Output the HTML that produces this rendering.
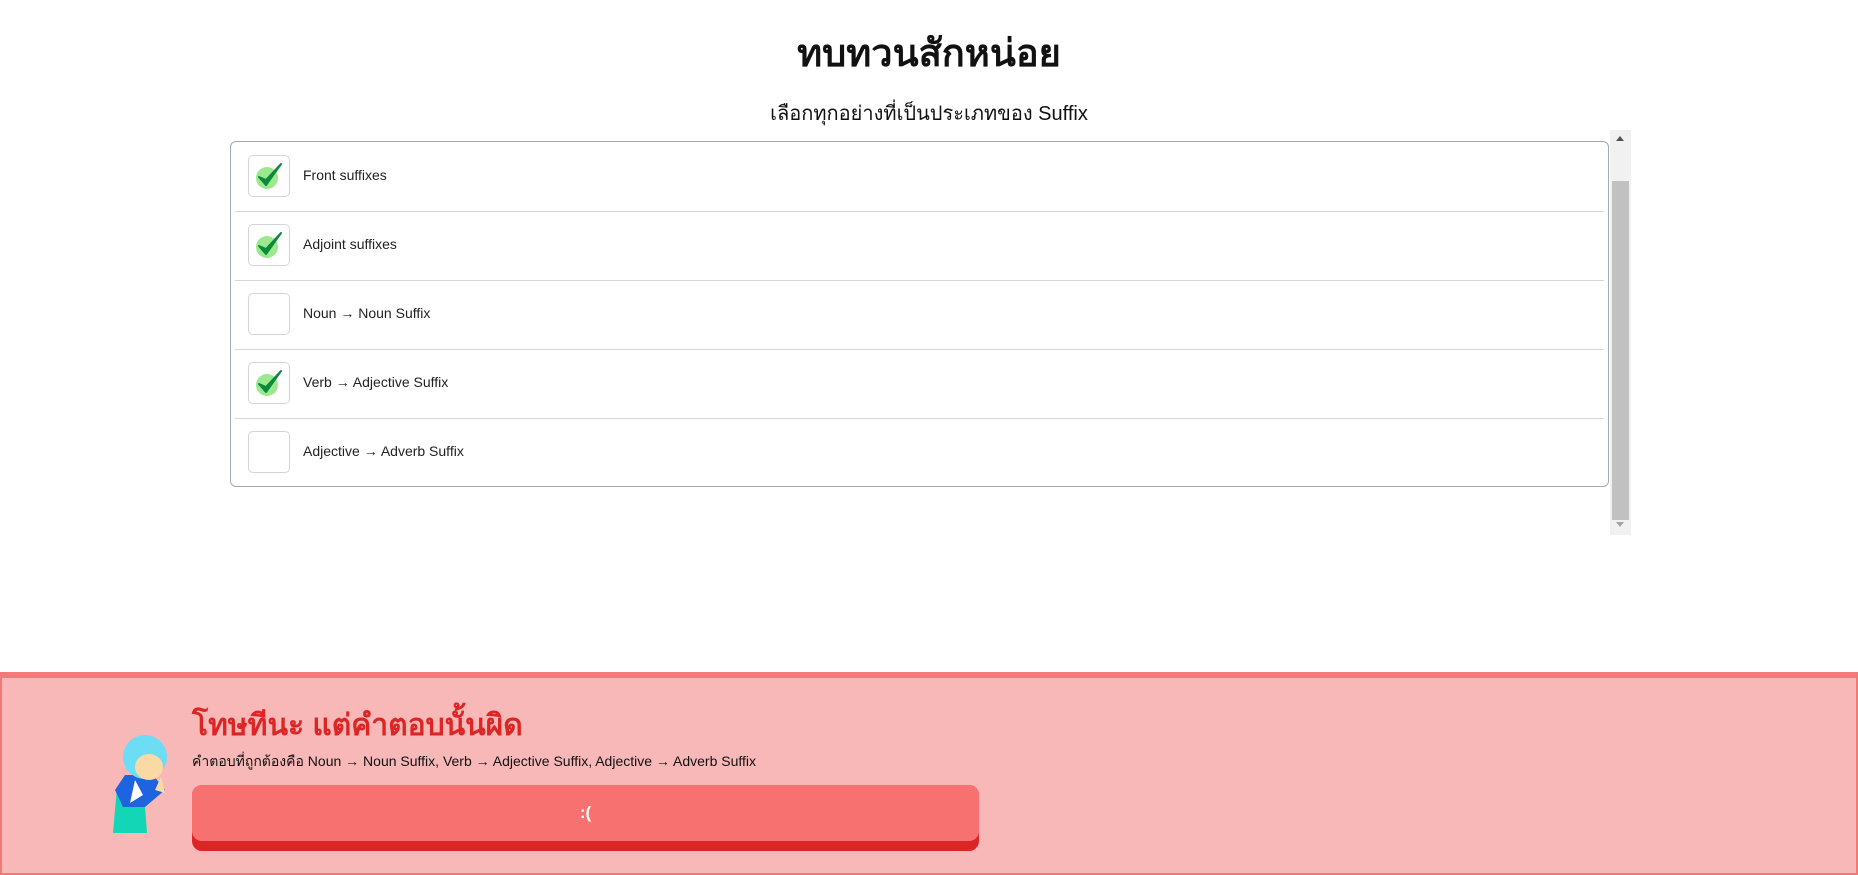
<!DOCTYPE html>
<html><head><meta charset="utf-8"><style>
body{margin:0;width:1858px;height:871px;background:#fff;position:relative;overflow:hidden;font-family:"Liberation Sans","Noto Sans CJK SC",sans-serif;}
.t{position:absolute;left:0;width:1858px;text-align:center;color:#111}
.box{position:absolute;left:230px;top:141px;width:1377px;height:344px;border:1px solid #a3a8b3;border-radius:6px;}
.row{position:absolute;left:4px;width:1369px;height:69px;border-bottom:1px solid #d4d6dc;}
.row:last-child{border-bottom:none}
.cb{position:absolute;left:13px;top:13px;width:40px;height:40px;border:1px solid #d3d5da;border-radius:5px;background:#fff}
.lb{position:absolute;left:68px;top:25px;font-size:14px;color:#222}
.sb{position:absolute;left:1610px;top:130px;width:21px;height:405px;background:#f1f1f1}
.th{position:absolute;left:2px;top:51px;width:17px;height:339px;background:#c1c1c1}
</style></head><body>
<div class="t" style="top:22px;font-size:38px;font-weight:bold">ทบทวนสักหน่อย</div>
<div class="t" style="top:97px;font-size:20px">เลือกทุกอย่างที่เป็นประเภทของ Suffix</div>
<div class="box">
<div class="row" style="top:0"><div class="cb"><svg width="40" height="40"><circle cx="18" cy="22" r="11" fill="#9be88e"/><path d="M10 21 L17 29 L32 8 L17 24 Z" fill="#0b8a3a" stroke="#0b8a3a" stroke-width="2" stroke-linejoin="round"/></svg></div><div class="lb">Front suffixes</div></div>
<div class="row" style="top:69px"><div class="cb"><svg width="40" height="40"><circle cx="18" cy="22" r="11" fill="#9be88e"/><path d="M10 21 L17 29 L32 8 L17 24 Z" fill="#0b8a3a" stroke="#0b8a3a" stroke-width="2" stroke-linejoin="round"/></svg></div><div class="lb">Adjoint suffixes</div></div>
<div class="row" style="top:138px"><div class="cb"></div><div class="lb">Noun → Noun Suffix</div></div>
<div class="row" style="top:207px"><div class="cb"><svg width="40" height="40"><circle cx="18" cy="22" r="11" fill="#9be88e"/><path d="M10 21 L17 29 L32 8 L17 24 Z" fill="#0b8a3a" stroke="#0b8a3a" stroke-width="2" stroke-linejoin="round"/></svg></div><div class="lb">Verb → Adjective Suffix</div></div>
<div class="row" style="top:276px"><div class="cb"></div><div class="lb">Adjective → Adverb Suffix</div></div>
</div>
<div class="sb"><div style="position:absolute;left:6px;top:6px;border:4px solid transparent;border-bottom:5px solid #505050;border-top:none"></div><div class="th"></div><div style="position:absolute;left:6px;top:392px;border:4px solid transparent;border-top:5px solid #a3a3a3;border-bottom:none"></div></div>
<div style="position:absolute;left:0;top:672px;width:1854px;height:195px;background:#f8b8b8;border:2px solid #f07a7a;border-top:6px solid #f07a7a"></div>
<svg style="position:absolute;left:95px;top:735px" width="95" height="98">
<path d="M22 52 L18 98 L52 98 L50 72 L36 58Z" fill="#12d6b5"/>
<path d="M30 40 L20 55 L28 72 L50 72 L70 55 L58 40Z" fill="#1e63e0"/>
<path d="M40 45 L35 68 L48 60Z" fill="#fff"/>
<ellipse cx="50" cy="22" rx="22" ry="22" fill="#6ddcf5"/>
<ellipse cx="54" cy="32" rx="14" ry="13" fill="#fbd9a5"/>
<path d="M60 55 L66 42 L70 58Z" fill="#fbd9a5"/>
</svg>
<div style="position:absolute;left:192px;top:702px;font-size:30px;font-weight:bold;color:#dc2626">โทษทีนะ แต่คำตอบนั้นผิด</div>
<div style="position:absolute;left:192px;top:751px;font-size:14px;color:#111">คำตอบที่ถูกต้องคือ Noun → Noun Suffix, Verb → Adjective Suffix, Adjective → Adverb Suffix</div>
<div style="position:absolute;left:192px;top:785px;width:787px;height:66px;background:#dc2626;border-radius:10px"></div>
<div style="position:absolute;left:192px;top:785px;width:787px;height:56px;background:#f77171;border-radius:10px;color:#fff;font-weight:bold;font-size:17px;text-align:center;line-height:56px">:(</div>
</body></html>
